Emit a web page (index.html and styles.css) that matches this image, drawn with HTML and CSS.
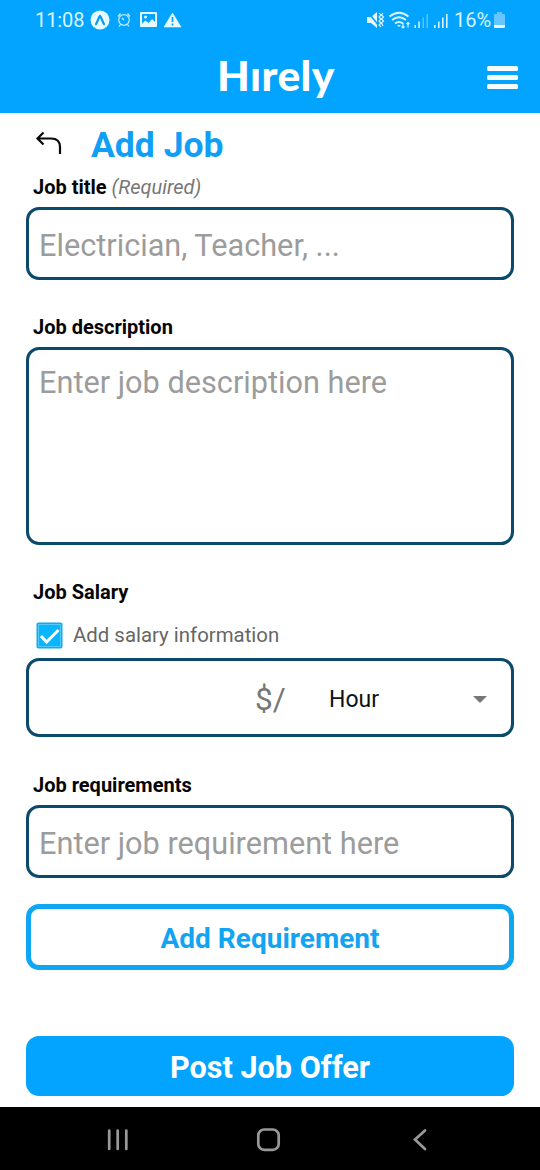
FILE: index.html
```html
<!DOCTYPE html>
<html lang="en">
<head>
<meta charset="utf-8">
<meta name="viewport" content="width=device-width">
<title>Hirely - Add Job</title>
<link rel="stylesheet" href="styles.css">
</head>
<body>
<div class="screen">
  <div class="status">
    <span class="clock">11:08</span>
    <svg class="status-left" width="92" height="22" viewBox="0 0 92 22">
      <circle cx="10" cy="11" r="9.500" fill="#e6faff"/>
      <path d="M6 15c2-3 2.500-7 4-8 1.500 1 2 5 4 8" fill="none" stroke="#0799ef" stroke-width="2.200" stroke-linecap="round"/>
      <g fill="none" stroke="#c4efff" stroke-width="1.200"><circle cx="34" cy="11" r="5.300"/><path d="M34 11l-2-2M28 7.500l2.500-3M40 7.500l-2.500-3M30.500 15.500l-1.500 2M37.500 15.500l1.500 2"/></g>
      <path fill="#e6faff" fill-rule="evenodd" d="M51 3h15q1 0 1 1v13q0 1-1 1H51q-1 0-1-1V4q0-1 1-1zM52 5v9.500l3.500-3 3 2.500 3.500-4 3 3V5z"/>
      <circle cx="55.500" cy="8" r="1.500" fill="#e6faff"/>
      <path d="M82.500 4l8.500 14H74z" fill="#e6faff" stroke="#e6faff" stroke-linejoin="round" stroke-width=".6"/>
      <path d="M82.500 8v5M82.500 14.500v2" stroke="#08a0f4" stroke-width="1.700"/>
    </svg>
    <span class="grow"></span>
    <svg class="status-right" width="84" height="22" viewBox="0 0 84 22">
      <path d="M1 8h4l6-5v16l-6-5H1z" fill="#e6faff"/>
      <path d="M2 3l11 14" stroke="#06a2fa" stroke-width="1.600"/>
      <path d="M13 4l2 2-2 2 2 2-2 2 2 2-2 2 2 2M17 4l-1.500 2 2 2-2 2 2 2-2 2 1.500 3" fill="none" stroke="#d5f4ff" stroke-width="1.200"/>
      <g fill="none" stroke="#d9f6ff" stroke-width="1.800"><path d="M23.500 7.500q9.500-7.500 19 0M26 11q7-5.500 14 0M29 14.500q4-3 8 0"/></g>
      <path d="M31 16h4l-2 2z" fill="#e6faff"/>
      <path d="M37 14v5M35.500 17.500L37 19l1.500-1.500M42 18.500v-5M40.500 15l1.500-1.500 1.500 1.500" fill="none" stroke="#d9f6ff" stroke-width="1.200"/>
      <g fill="#d9f6ff"><path d="M48.500 16h1.500v3h-1.500zM52.300 12.500h1.500V19h-1.500z"/><path opacity=".4" d="M56.500 8.500H58V19h-1.500zM60.500 5H62v14h-1.500z"/><path d="M68 16h1.600v3H68zM72 12.500h1.600V19H72zM76 8.500h1.600V19H76zM80 5h1.600v14H80z"/></g>
    </svg>
    <span class="percent">16%</span>
    <svg class="battery" width="12" height="18" viewBox="0 0 12 18"><path d="M3 1h5v2h2q1 0 1 1v10H0V4q0-1 1-1h2z" fill="#66c6ff"/><path d="M0 14h11v2q0 1-1 1H1q-1 0-1-1z" fill="#e9faff"/></svg>
  </div>
  <header class="header">
    <div class="logo">Hırely</div>
    <div class="menu"><i></i><i></i><i></i></div>
  </header>
  <main class="form">
    <div class="title-row">
      <svg width="28" height="28" viewBox="0 0 28 28"><path d="M8.500 2.500L2.500 8.500l6 6M3 8.500H16q9 0 9 8.500V24" fill="none" stroke="#080808" stroke-width="2.200"/></svg>
      <h1>Add Job</h1>
    </div>
    <div class="label first">Job title <em>(Required)</em></div>
    <div class="field single">Electrician, Teacher, ...</div>
    <div class="label desc-label">Job description</div>
    <div class="field area">Enter job description here</div>
    <div class="label salary-label">Job Salary</div>
    <div class="check-row">
      <svg width="27" height="27" viewBox="0 0 27 27"><rect x=".5" y=".5" width="26" height="26" rx="2" fill="#12a9ef"/><rect x="2.500" y="2.500" width="22" height="22" fill="#09b5ff" stroke="#55c9f8"/><path d="M5 14l5.500 6L22.500 8" fill="none" stroke="#fff" stroke-width="3"/></svg>
      <span>Add salary information</span>
    </div>
    <div class="field salary"><span class="currency">$/</span><span class="unit">Hour</span><i class="caret"></i></div>
    <div class="label req-label">Job requirements</div>
    <div class="field single requirement">Enter job requirement here</div>
    <div class="button outline">Add Requirement</div>
    <div class="button solid">Post Job Offer</div>
  </main>
  <nav class="navbar">
    <svg width="540" height="63" viewBox="0 0 540 63"><g fill="none" stroke="#999" stroke-width="2.700" stroke-linecap="round"><path d="M109.200 23.500v18.500M117.700 23.500v18.500M126.300 23.500v18.500"/><rect x="258.300" y="22.500" width="20.400" height="20.400" rx="6"/><path d="M425 23.500l-10 9 10 9.500"/></g></svg>
  </nav>
</div>
</body>
</html>
```
FILE: styles.css
```css
* { box-sizing: border-box; }
body { margin: 0; font-family: Roboto, "Liberation Sans", sans-serif; background: #fff; }
.screen { width: 540px; height: 1170px; display: flex; flex-direction: column; overflow: hidden; }
svg { display: block; flex: none; }
.status { height: 40px; padding: 0 34px 0 35px; display: flex; align-items: center; background: #02a4ff; color: #d9f6ff; font-size: 20px; }
.clock { width: 55px; letter-spacing: -.1px; }
.grow { flex: 1; }
.status-right { margin-right: 4px; }
.percent { width: 40px; }
.header { height: 73px; padding: 0 22px 0 217px; display: flex; justify-content: space-between; background: #02a4ff; }
.logo { font: 900 42.500px/70px Lato, sans-serif; color: #fff; letter-spacing: .4px; }
.menu { width: 31px; padding-top: 26px; display: flex; flex-direction: column; gap: 4px; }
.menu i { height: 5px; border-radius: 1.500px; background: #f5fdff; }
.form { height: 994px; padding: 0 26px; display: flex; flex-direction: column; }
.title-row { height: 61px; padding: 17px 0 0 9px; display: flex; }
h1 { margin: -5px 0 0 28px; font-size: 35.500px; line-height: 40px; color: #109ff5; }
.label { height: 33px; padding-left: 7px; font-size: 20px; font-weight: 700; line-height: 27px; color: #050505; white-space: nowrap; }
.label em { font-weight: 400; color: #777; }
.field { border: 3px solid #0b4a6b; border-radius: 13px; padding-left: 10px; font-size: 30.700px; color: #9c9c9c; white-space: nowrap; flex: none; }
.single { height: 73px; line-height: 71px; }
.desc-label { margin-top: 34px; }
.area { height: 198px; line-height: 65px; }
.salary-label { margin-top: 33px; height: 30px; line-height: 28px; }
.check-row { height: 50px; padding: 4px 0 0 10px; display: flex; align-items: center; gap: 10px; font-size: 20.400px; color: #666; }
.salary { height: 79px; padding: 3px 0 0 226px; display: flex; align-items: center; }
.currency { width: 74px; font-size: 31.500px; color: #777; }
.unit { width: 144px; font-size: 23px; color: #111; }
.caret { border: 7px solid transparent; border-top-color: #777; border-bottom: 0; }
.req-label { margin-top: 35px; }
.button { display: flex; align-items: center; justify-content: center; font-size: 28px; font-weight: 700; flex: none; }
.outline { height: 66px; margin-top: 26px; border: 5px solid #0fa6f4; border-radius: 13px; color: #12a4f1; padding-top: 3px; }
.solid { height: 60px; margin-top: 66px; border-radius: 13px; background: #02a4ff; color: #fff; padding-top: 3px; font-size: 30.600px; }
.navbar { height: 63px; background: #000; }
```
